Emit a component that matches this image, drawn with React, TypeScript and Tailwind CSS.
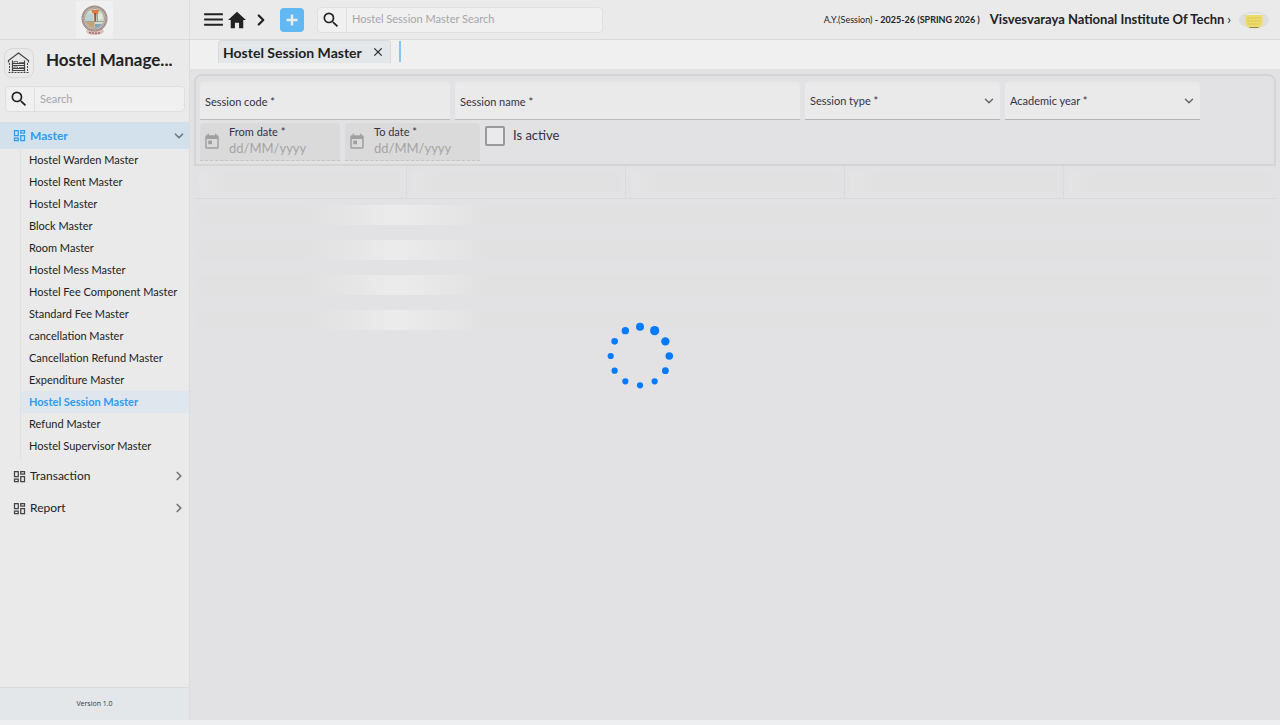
import React from 'react';
import { MdMenu, MdSearch, MdOutlineDashboard, MdToday, MdClose } from 'react-icons/md';
import { IoMdHome } from 'react-icons/io';
import { ChevronDown, ChevronRight } from 'lucide-react';

const masterItems = [
  'Hostel Warden Master',
  'Hostel Rent Master',
  'Hostel Master',
  'Block Master',
  'Room Master',
  'Hostel Mess Master',
  'Hostel Fee Component Master',
  'Standard Fee Master',
  'cancellation Master',
  'Cancellation Refund Master',
  'Expenditure Master',
  'Hostel Session Master',
  'Refund Master',
  'Hostel Supervisor Master',
];

const spinnerRadii = [4, 4.6, 4.2, 3.8, 3.4, 3.1, 3.1, 3.1, 3.1, 3.1, 3.3, 3.7];

function InstituteLogo() {
  return (
    <svg viewBox="0 0 37 37" className="size-[37px] bg-[#f0f0f0]" role="img" aria-label="Institute logo">
      <path d="M12 27h14l2 3q-1 4-9 4t-9-4z" fill="#dcc0b8" />
      <path d="M13 31.500q6 1.500 12 0" fill="none" stroke="#9c6f66" strokeWidth="1.500" strokeDasharray="2 1" />
      <circle cx="18.500" cy="17.500" r="12" fill="#d6c9b8" stroke="#978a86" strokeWidth="2" />
      <circle cx="18.500" cy="17.500" r="12" fill="none" stroke="#cbb9ae" strokeWidth="1" strokeDasharray="1 1.500" />
      <circle cx="18.500" cy="17.500" r="10" fill="#cfdccd" stroke="#9a8c88" strokeWidth=".8" />
      <path d="M10 21h8.500v6a10 10 0 0 1-8.500-6z" fill="#c3a374" />
      <path d="M19 23h7a10 10 0 0 1-7 4z" fill="#7fa5bd" />
      <path d="M10 13h7v7h-7z" fill="#b8d2d5" />
      <path d="M15 9h8l-1 3.500h-5z" fill="#dd7b3c" />
      <path d="M18 12h2.500l-.5 9h-1.500z" fill="#b24e32" />
      <path d="M22 13h4v5h-4z" fill="#e2e8d7" />
      <path d="M10 20.500h17M21.500 12v9" stroke="#7f8c80" strokeWidth=".7" />
    </svg>
  );
}

function HostelIcon() {
  return (
    <svg viewBox="0 0 24 24" className="size-6" fill="none" stroke="#444" aria-hidden="true">
      <path d="M1.500 11.500V9.500L11.500 2l10 7.500v2" strokeWidth="1.200" />
      <path d="M2.500 12v9M20.500 12v9" strokeWidth="1" strokeDasharray="2 1" />
      <path d="M1.500 21.500h20" strokeWidth="1" strokeDasharray="2 1" />
      <path d="M5.500 9.500v11M17.500 9.500v11" strokeWidth="1.200" />
      <path d="M5.500 14.500h12M5.500 19.500h12M6 12.500h11M6 17.500h11" strokeWidth="1" />
      <path d="M7 12.500v-2h3.500v2M7 17.500v-1.500h3.500v1.500M12 11.500h5M12 16.500h5" strokeWidth=".7" />
    </svg>
  );
}

function Avatar() {
  return (
    <svg viewBox="0 0 30 18" className="h-[18px] w-[30px]" role="img" aria-label="User">
      <ellipse cx="15" cy="9" rx="15" ry="8.500" fill="#dedede" />
      <path d="M7 2.500h16v2H7z" fill="#ececec" />
      <path d="M6.500 4h17v9q-1 3-4 4h-9q-3-1-4-4z" fill="#ecdc6c" />
      <path d="M8 7h14M8 10h14M9 13h12" stroke="#d8c552" strokeWidth="1" strokeDasharray="3 .5" />
      <path d="M10.500 16.500h9" stroke="#8b8550" strokeWidth="1" />
    </svg>
  );
}

function SearchBox({ label, className }: { label: string; className: string }) {
  return (
    <div className={`flex h-[26px] overflow-hidden rounded border border-[#dfdfdf] bg-[#f0f0f0] ${className}`}>
      <button type="button" aria-label="Run search" className="flex w-[29px] shrink-0 items-center justify-center border-r border-[#dfdfdf] pr-[2px] text-[#222]">
        <MdSearch className="size-5" />
      </button>
      <input
        type="text"
        aria-label={label}
        placeholder={label}
        className="min-w-0 flex-1 bg-transparent px-[5px] text-[11px] placeholder:text-[#a6a6ad] focus:outline-none"
      />
    </div>
  );
}

function TextField({ id, label, className }: { id: string; label: string; className: string }) {
  return (
    <div className={`relative h-[38px] rounded-t border-b border-[#bcbcc0] bg-[#eaeaea] ${className}`}>
      <label htmlFor={id} className="absolute top-3 left-[5px] text-[11px] leading-4">{label} *</label>
      <input id={id} type="text" className="size-full bg-transparent px-[5px] pt-3 text-[12px] focus:outline-none" />
    </div>
  );
}

function SelectField({ id, label }: { id: string; label: string }) {
  return (
    <div className="relative h-[38px] w-[195px] rounded-t border-b border-[#b4b4b8] bg-[#eaeaea]">
      <label htmlFor={id} className="absolute top-[11px] left-[5px] text-[11px] leading-4">{label} *</label>
      <select id={id} defaultValue="" className="size-full appearance-none bg-transparent px-[5px] focus:outline-none">
        <option value="" />
      </select>
      <ChevronDown className="pointer-events-none absolute top-3 right-1 size-[14px] text-[#666]" strokeWidth={2.5} />
    </div>
  );
}

function DateField({ id, label, className }: { id: string; label: string; className: string }) {
  return (
    <div className={`flex h-[38px] items-center rounded-t border-b border-dashed border-[#c4c4c4] bg-[#dadada] ${className}`}>
      <button type="button" disabled aria-label={`Pick ${label}`} className="flex w-[29px] shrink-0 pl-[3px] text-[#a0a0a0]">
        <MdToday className="size-[18px]" />
      </button>
      <div className="flex min-w-0 flex-1 flex-col pb-1">
        <label htmlFor={id} className="text-[11px] leading-4">{label} *</label>
        <input id={id} type="text" disabled placeholder="dd/MM/yyyy" className="h-4 w-full bg-transparent text-[13px] leading-4 placeholder:text-[#a5a5a5]" />
      </div>
    </div>
  );
}

function NavGroup({ label }: { label: string }) {
  return (
    <button type="button" className="flex h-8 items-center pr-[3px] pl-3 text-[12px] text-[#222]">
      <MdOutlineDashboard className="mr-[3px] size-[15px] text-[#444]" />
      {label}
      <ChevronRight className="ml-auto size-[14px] text-[#777]" strokeWidth={3} />
    </button>
  );
}

export default function App() {
  return (
    <div className="flex min-h-screen flex-col bg-[#eeeff0] pb-[5px] font-['Lato','Liberation_Sans',sans-serif] text-[#333344]">
      <header className="flex h-10 border-b border-[#dadada] bg-[#eaeaea] text-[#222]">
        <div className="flex w-[190px] shrink-0 items-center justify-center border-r border-[#dedede]">
          <InstituteLogo />
        </div>
        <div className="flex min-w-0 flex-1 items-center pr-[11px] pl-[11px]">
          <button type="button" aria-label="Menu"><MdMenu className="size-[25px]" /></button>
          <button type="button" aria-label="Home"><IoMdHome className="size-[22px]" /></button>
          <button type="button" aria-label="Next" className="ml-1"><ChevronRight className="size-[18px]" strokeWidth={3} /></button>
          <button type="button" aria-label="Add" className="ml-[10px] flex size-6 items-center justify-center rounded bg-[#61b8f2]">
            <svg viewBox="0 0 12 12" className="size-3" stroke="#eaeaea" strokeWidth="2.500"><path d="M6 .5v11M.5 6h11" /></svg>
          </button>
          <SearchBox label="Hostel Session Master Search" className="ml-[13px] w-[286px]" />
          <div className="ml-auto flex items-center whitespace-nowrap">
            <p className="text-[9px]">A.Y.(Session) <b>- 2025-26 (SPRING 2026 )</b></p>
            <a href="#institute" className="ml-[10px] flex items-center gap-[3px] text-[13px] font-bold">
              Visvesvaraya National Institute Of Techn
              <span className="font-normal">›</span>
            </a>
            <button type="button" aria-label="Profile" className="ml-2"><Avatar /></button>
          </div>
        </div>
      </header>

      <div className="flex flex-1">
        <aside className="flex w-[190px] shrink-0 flex-col border-r border-[#dcdcde] bg-[#eaeaea]">
          <div className="flex items-center px-1 pt-2">
            <div className="flex size-[30px] shrink-0 items-center justify-center rounded-lg border border-[#d8d8d8] pr-px"><HostelIcon /></div>
            <h1 className="ml-3 truncate pb-[6px] text-[17px] leading-6 font-bold text-[#222]">Hostel Manage...</h1>
          </div>
          <SearchBox label="Search" className="mt-2 mr-1 ml-[5px]" />

          <nav className="mt-[10px] flex flex-col">
            <button type="button" className="flex h-[27px] items-center bg-[#d3e1ec] pr-[3px] pl-3 text-[12px] font-bold text-[#2b9cf0]">
              <MdOutlineDashboard className="mr-[3px] size-[15px]" />
              Master
              <ChevronDown className="ml-auto size-[14px] text-[#777]" strokeWidth={3} />
            </button>
            <ul className="ml-5 border-l border-[#dde1e5] pb-[3px] text-[11px] text-[#222]">
              {masterItems.map((item) => (
                <li key={item}>
                  <a
                    href="#master"
                    className={
                      item === 'Hostel Session Master'
                        ? 'block h-[22px] bg-[#dfe6ee] pl-2 leading-[22px] font-bold text-[#2b9cf0]'
                        : 'block h-[22px] pl-2 leading-[22px]'
                    }
                  >
                    {item}
                  </a>
                </li>
              ))}
            </ul>
            <NavGroup label="Transaction" />
            <NavGroup label="Report" />
          </nav>

          <footer className="mt-auto flex h-[33px] items-center justify-center border-t border-[#d8dadc] bg-[#e3e7ea] pt-px font-['Open_Sans',sans-serif] text-[7px]">
            Version 1.0
          </footer>
        </aside>

        <main className="flex min-w-0 flex-1 flex-col bg-[#e2e2e4]">
          <div className="flex h-[29px] items-start bg-[#f0f0f0] pl-7">
            <div className="flex h-[23px] items-center rounded-t border border-b-0 border-[#dadada] bg-[#e3e7ea] pr-[5px] pl-1 text-[#222]">
              <span className="text-[14px] font-bold">Hostel Session Master</span>
              <button type="button" aria-label="Close tab" className="ml-[9px]"><MdClose className="size-[14px]" /></button>
            </div>
            <div className="mt-px ml-2 h-[21px] w-[3px] border-l-2 border-[#84c5f2]" />
          </div>

          <form className="mx-1 mt-[5px] flex flex-wrap gap-x-[5px] gap-y-[3px] rounded-t-lg border-2 border-[#d5d5d3] px-[4px] pt-[6px] pb-[3px]">
            <TextField id="code" label="Session code" className="w-[250px]" />
            <TextField id="name" label="Session name" className="w-[345px]" />
            <SelectField id="type" label="Session type" />
            <SelectField id="year" label="Academic year" />
            <DateField id="from" label="From date" className="w-[140px]" />
            <DateField id="to" label="To date" className="w-[135px]" />
            <label className="flex h-[25px] items-center gap-2 text-[13px]">
              <input type="checkbox" className="size-5 appearance-none rounded-[2px] border-2 border-[#999] bg-[#eaeaea]" />
              Is active
            </label>
          </form>

          <section aria-label="Loading" aria-busy="true" className="mx-1">
            <div className="grid h-[33px] grid-cols-[213fr_219fr_219fr_219fr_212fr] border-b border-[#d9d9dc]">
              {[0, 1, 2, 3, 4].map((col) => (
                <div key={col} className="border-r border-[#dadadd] px-[5px] py-[6px] last:border-r-0">
                  <div className="h-full rounded-sm bg-[linear-gradient(90deg,#e4e4e4_0%,#e3e3e3_5%,#e1e1e1_13%,#e1e1e1_100%)]" />
                </div>
              ))}
            </div>
            <div className="flex flex-col gap-[15px] px-1 pt-[6px]">
              {[0, 1, 2, 3].map((row) => (
                <div key={row} className="h-5 rounded-sm bg-[linear-gradient(90deg,#e1e1e1_10%,#e5e5e5_14%,#ebebeb_18%,#ebebeb_19%,#e6e6e6_23%,#e1e1e1_27%)]" />
              ))}
            </div>
          </section>
        </main>
      </div>

      <div role="status" aria-label="Loading" className="pointer-events-none fixed inset-0 flex items-center justify-center pb-[14px]">
        <svg viewBox="-36 -36 72 72" className="size-[72px]" fill="#007bff">
          {spinnerRadii.map((r, i) => {
            const angle = (i * Math.PI) / 6;
            return <circle key={i} cx={29.3 * Math.sin(angle)} cy={-29.3 * Math.cos(angle)} r={r} />;
          })}
        </svg>
      </div>
    </div>
  );
}
